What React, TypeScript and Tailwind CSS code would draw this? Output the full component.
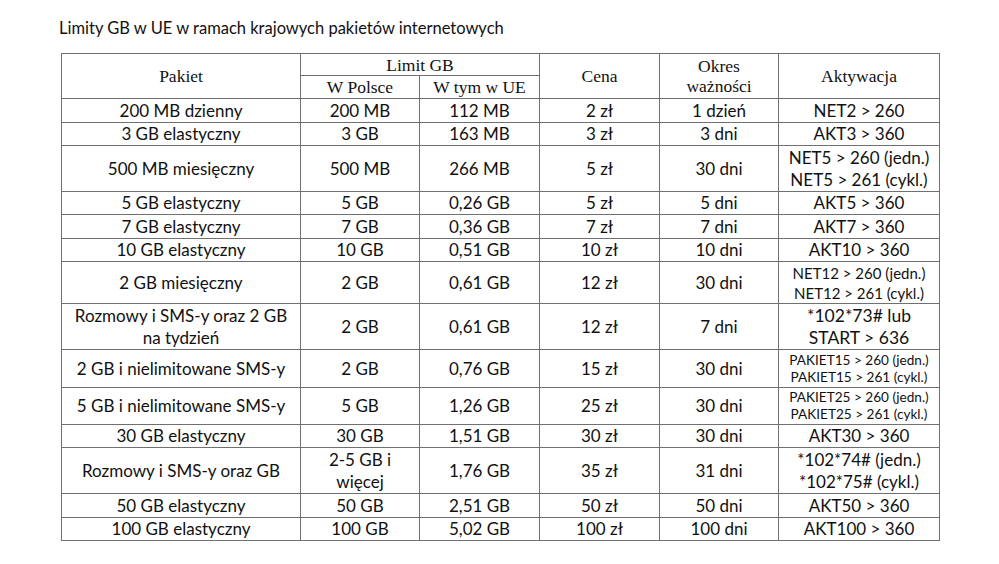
const rows: { name: string[]; pl: string[]; ue: string; price: string; period: string; act: string[]; h: number; actSize?: string; actLh?: string }[] = [
  { name: ['200 MB dzienny'], pl: ['200 MB'], ue: '112 MB', price: '2 zł', period: '1 dzień', act: ['NET2 > 260'], h: 24 },
  { name: ['3 GB elastyczny'], pl: ['3 GB'], ue: '163 MB', price: '3 zł', period: '3 dni', act: ['AKT3 > 360'], h: 23 },
  { name: ['500 MB miesięczny'], pl: ['500 MB'], ue: '266 MB', price: '5 zł', period: '30 dni', act: ['NET5 > 260 (jedn.)', 'NET5 > 261 (cykl.)'], h: 46, actLh: 'leading-[22px]' },
  { name: ['5 GB elastyczny'], pl: ['5 GB'], ue: '0,26 GB', price: '5 zł', period: '5 dni', act: ['AKT5 > 360'], h: 23 },
  { name: ['7 GB elastyczny'], pl: ['7 GB'], ue: '0,36 GB', price: '7 zł', period: '7 dni', act: ['AKT7 > 360'], h: 24 },
  { name: ['10 GB elastyczny'], pl: ['10 GB'], ue: '0,51 GB', price: '10 zł', period: '10 dni', act: ['AKT10 > 360'], h: 23 },
  { name: ['2 GB miesięczny'], pl: ['2 GB'], ue: '0,61 GB', price: '12 zł', period: '30 dni', act: ['NET12 > 260 (jedn.)', 'NET12 > 261 (cykl.)'], h: 42, actSize: 'text-[15px]', actLh: 'leading-[20px]' },
  { name: ['Rozmowy i SMS-y oraz 2 GB', 'na tydzień'], pl: ['2 GB'], ue: '0,61 GB', price: '12 zł', period: '7 dni', act: ['*102*73# lub', 'START > 636'], h: 46, actSize: 'text-[17.5px]', actLh: 'leading-[22px]' },
  { name: ['2 GB i nielimitowane SMS-y'], pl: ['2 GB'], ue: '0,76 GB', price: '15 zł', period: '30 dni', act: ['PAKIET15 > 260 (jedn.)', 'PAKIET15 > 261 (cykl.)'], h: 38, actSize: 'text-[13.6px]', actLh: 'leading-[17px]' },
  { name: ['5 GB i nielimitowane SMS-y'], pl: ['5 GB'], ue: '1,26 GB', price: '25 zł', period: '30 dni', act: ['PAKIET25 > 260 (jedn.)', 'PAKIET25 > 261 (cykl.)'], h: 37, actSize: 'text-[13.6px]', actLh: 'leading-[17px]' },
  { name: ['30 GB elastyczny'], pl: ['30 GB'], ue: '1,51 GB', price: '30 zł', period: '30 dni', act: ['AKT30 > 360'], h: 23 },
  { name: ['Rozmowy i SMS-y oraz GB'], pl: ['2-5 GB i', 'więcej'], ue: '1,76 GB', price: '35 zł', period: '31 dni', act: ['*102*74# (jedn.)', '*102*75# (cykl.)'], h: 46, actLh: 'leading-[22px]' },
  { name: ['50 GB elastyczny'], pl: ['50 GB'], ue: '2,51 GB', price: '50 zł', period: '50 dni', act: ['AKT50 > 360'], h: 24 },
  { name: ['100 GB elastyczny'], pl: ['100 GB'], ue: '5,02 GB', price: '100 zł', period: '100 dni', act: ['AKT100 > 360'], h: 22 },
]

const td = 'border border-[#707070] p-0 text-center align-middle'
const th = 'border border-[#707070] p-0 text-center align-middle font-normal'

function Lines({ items }: { items: string[] }) {
  return (
    <>
      {items.map((l, i) => (
        <div key={i}>{l}</div>
      ))}
    </>
  )
}

export default function App() {
  return (
    <div className="w-[999px] h-[564px] bg-white text-[#111] overflow-hidden" style={{ fontFamily: 'Lato, "Open Sans", sans-serif' }}>
      <div className="pt-[18px] pl-[59px] text-[16.5px] leading-[20px]">
        Limity GB w UE w ramach krajowych pakietów internetowych
      </div>
      <table className="ml-[61px] mt-[15px] border-collapse table-fixed w-[878px] text-[17px] leading-[22px]">
        <colgroup>
          <col className="w-[239px]" />
          <col className="w-[119px]" />
          <col className="w-[120px]" />
          <col className="w-[120px]" />
          <col className="w-[119px]" />
          <col className="w-[161px]" />
        </colgroup>
        <thead style={{ fontFamily: '"Liberation Serif", "DejaVu Serif", serif' }} className="text-[17.5px]">
          <tr className="h-[22px]">
            <th rowSpan={2} className={th}>Pakiet</th>
            <th colSpan={2} className={th + ' leading-[20px]'}>Limit GB</th>
            <th rowSpan={2} className={th}>Cena</th>
            <th rowSpan={2} className={th + ' leading-[20px]'}>
              <div>Okres</div>
              <div>ważności</div>
            </th>
            <th rowSpan={2} className={th}>Aktywacja</th>
          </tr>
          <tr className="h-[23px]">
            <th className={th + ' leading-[20px]'}>W Polsce</th>
            <th className={th + ' leading-[20px]'}>W tym w UE</th>
          </tr>
        </thead>
        <tbody>
          {rows.map((r, i) => (
            <tr key={i} style={{ height: r.h }}>
              <td className={td}><Lines items={r.name} /></td>
              <td className={td}><Lines items={r.pl} /></td>
              <td className={td}>{r.ue}</td>
              <td className={td}>{r.price}</td>
              <td className={td}>{r.period}</td>
              <td className={td + ' ' + (r.actSize ?? '') + ' ' + (r.actLh ?? '')}><Lines items={r.act} /></td>
            </tr>
          ))}
        </tbody>
      </table>
    </div>
  )
}
